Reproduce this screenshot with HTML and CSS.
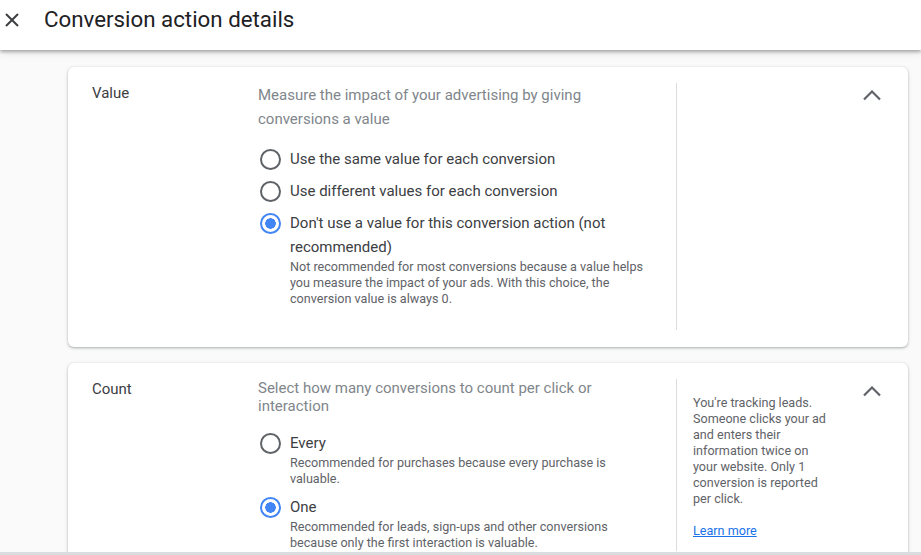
FILE: index.html
```html
<!DOCTYPE html>
<html lang="en">
<head>
<meta charset="utf-8">
<title>Conversion action details</title>
<link rel="stylesheet" href="styles.css">
</head>
<body>
<div class="app">
  <header class="topbar">
    <svg class="close" width="24" height="24" viewBox="0 0 24 24"><path d="M6 6L18 18M18 6L6 18" stroke="#3c4043" stroke-width="2" fill="none"/></svg>
    <h1 class="title">Conversion action details</h1>
  </header>
  <main class="content">
    <section class="card">
      <div class="label">Value</div>
      <div class="body body-value">
        <p class="desc desc-tall">Measure the impact of your advertising by giving conversions a value</p>
        <div class="options">
          <div class="option">
            <span class="radio"></span>
            <div class="opt-text"><div class="opt-label">Use the same value for each conversion</div></div>
          </div>
          <div class="option">
            <span class="radio"></span>
            <div class="opt-text"><div class="opt-label">Use different values for each conversion</div></div>
          </div>
          <div class="option">
            <span class="radio checked"></span>
            <div class="opt-text">
              <div class="opt-label">Don't use a value for this conversion action (not recommended)</div>
              <div class="opt-help">Not recommended for most conversions because a value helps you measure the impact of your ads. With this choice, the conversion value is always 0.</div>
            </div>
          </div>
        </div>
      </div>
      <aside class="side">
        <div class="side-text"></div>
        <svg class="chevron" width="24" height="24" viewBox="0 0 24 24"><polyline points="4,16.5 12,8.5 20,16.5" fill="none" stroke="#5f6368" stroke-width="2.2"/></svg>
      </aside>
    </section>
    <section class="card">
      <div class="label">Count</div>
      <div class="body">
        <p class="desc desc-short">Select how many conversions to count per click or interaction</p>
        <div class="options">
          <div class="option">
            <span class="radio"></span>
            <div class="opt-text">
              <div class="opt-label">Every</div>
              <div class="opt-help">Recommended for purchases because every purchase is valuable.</div>
            </div>
          </div>
          <div class="option">
            <span class="radio checked"></span>
            <div class="opt-text">
              <div class="opt-label">One</div>
              <div class="opt-help">Recommended for leads, sign-ups and other conversions because only the first interaction is valuable.</div>
            </div>
          </div>
        </div>
      </div>
      <aside class="side">
        <div class="side-text">
          <p class="side-p">You're tracking leads. Someone clicks your ad and enters their information twice on your website. Only 1 conversion is reported per click.</p>
          <a class="learn" href="#">Learn more</a>
        </div>
        <svg class="chevron" width="24" height="24" viewBox="0 0 24 24"><polyline points="4,16.5 12,8.5 20,16.5" fill="none" stroke="#5f6368" stroke-width="2.2"/></svg>
      </aside>
    </section>
  </main>
  <div class="bottom-strip"></div>
</div>
</body>
</html>
```

FILE: styles.css
```css
* { box-sizing: border-box; }
html, body { margin: 0; padding: 0; }
body {
  font-family: Roboto, "Liberation Sans", Arial, sans-serif;
  background: #fafafa;
  color: #3c4043;
  width: 921px;
  height: 555px;
  overflow: hidden;
}
.app {
  display: flex;
  flex-direction: column;
  height: 555px;
}
.topbar {
  position: relative;
  z-index: 2;
  height: 50px;
  flex: none;
  background: #fff;
  display: flex;
  align-items: flex-start;
  padding-top: 6px;
  box-shadow: 0 2px 3px rgba(0,0,0,0.28), 0 4px 8px rgba(0,0,0,0.08);
}
.close {
  display: block;
  margin-top: 2px;
  margin-right: 20px;
  flex: none;
}
.title {
  margin: 0;
  font-size: 22.3px;
  line-height: 26px;
  font-weight: 400;
  color: #202124;
}
.content {
  flex: 1;
  overflow: hidden;
  padding: 17px 13px 0 68px;
  display: flex;
  flex-direction: column;
  gap: 16px;
}
.card {
  flex: none;
  background: #fff;
  border-radius: 6px;
  box-shadow: 0 1px 2px rgba(60,64,67,0.28), 0 1px 3px 1px rgba(60,64,67,0.12);
  display: grid;
  grid-template-columns: 166px 418px 1fr;
  padding: 16px 0 17px 24px;
}
.label {
  font-size: 15px;
  line-height: 20px;
  color: #3c4043;
}
.body {
  padding-right: 24px;
}
.body-value { padding-bottom: 23px; }
.desc {
  margin: 0;
  font-size: 15px;
  color: #80868b;
}
.desc-tall { line-height: 24px; }
.desc-short { line-height: 18px; }
.options {
  margin-top: 16px;
  display: flex;
  flex-direction: column;
  gap: 8px;
}
.option {
  display: flex;
  align-items: flex-start;
  gap: 8px;
}
.radio {
  flex: none;
  width: 24px;
  height: 24px;
  padding-left: 2px;
  display: flex;
  align-items: center;
}
.radio::before {
  content: "";
  width: 21px;
  height: 21px;
  border-radius: 50%;
  border: 2px solid #5f6368;
  box-sizing: border-box;
}
.radio.checked::before {
  border-color: #4285f4;
  background: radial-gradient(circle, #4285f4 0 5px, #fff 5.5px);
}
.opt-text { flex: 1; }
.opt-label {
  font-size: 15px;
  line-height: 24px;
  color: #3c4043;
}
.opt-help {
  font-size: 12.6px;
  line-height: 16px;
  color: #5f6368;
}
.side {
  border-left: 1px solid #dadce0;
  display: flex;
  align-items: flex-start;
  padding-right: 24px;
}
.side-text {
  width: 154px;
  padding: 16px 0 0 16px;
}
.side-p {
  margin: 0;
  font-size: 12.6px;
  line-height: 16px;
  color: #5f6368;
}
.learn {
  display: inline-block;
  margin-top: 16px;
  font-size: 12.6px;
  line-height: 16px;
  color: #1a73e8;
  text-decoration: underline;
}
.chevron {
  display: block;
  margin-left: auto;
  flex: none;
}
.bottom-strip {
  flex: none;
  height: 3px;
  background: #dadce0;
}
```
